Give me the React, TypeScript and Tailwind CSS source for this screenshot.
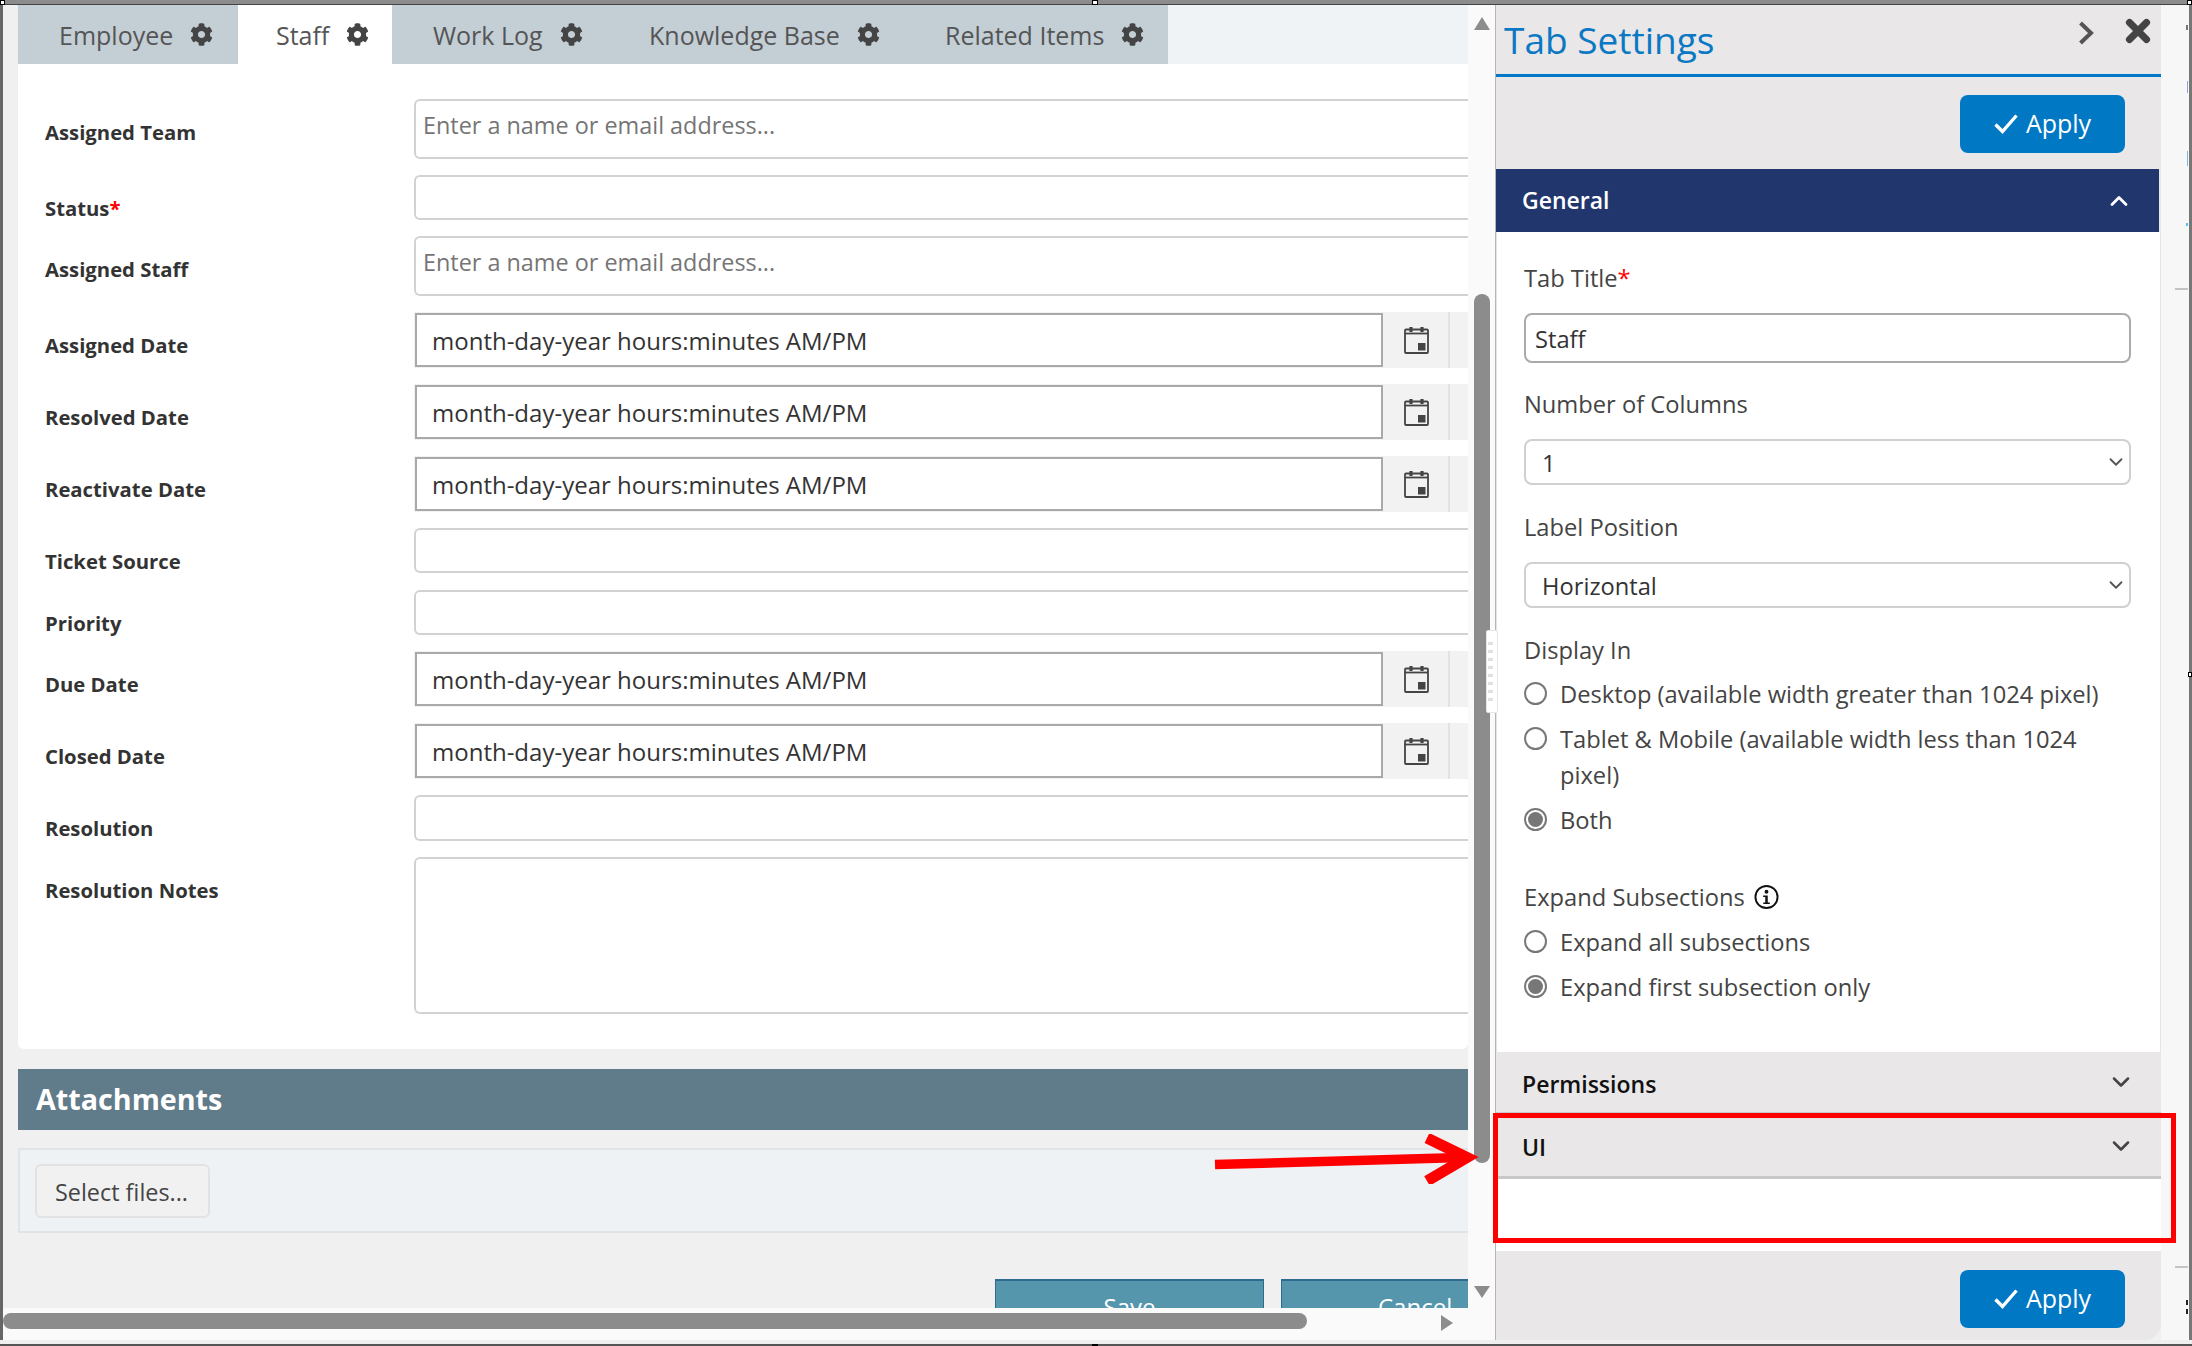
import { FaCog } from 'react-icons/fa'
import { ChevronDown, ChevronUp, X } from 'lucide-react'

const FONT = 'font-["Open_Sans",sans-serif]'

const TABS = [
  { name: 'Employee', w: 'w-[220px]', pl: 'pl-[41px]', active: false },
  { name: 'Staff', w: 'w-[154px]', pl: 'pl-[38px]', active: true },
  { name: 'Work Log', w: 'w-[216px]', pl: 'pl-[41px]', active: false },
  { name: 'Knowledge Base', w: 'w-[299px]', pl: 'pl-[41px]', active: false },
  { name: 'Related Items', w: 'w-[261px]', pl: 'pl-[38px]', active: false },
]

type Row = { label: string; kind: 'people' | 'text' | 'date' | 'area'; box: string; required?: boolean }

const ROWS: Row[] = [
  { label: 'Assigned Team', kind: 'people', box: 'mt-[35px] h-[60px]' },
  { label: 'Status', kind: 'text', box: 'mt-[16px] h-[45px]', required: true },
  { label: 'Assigned Staff', kind: 'people', box: 'mt-[16px] h-[60px]' },
  { label: 'Assigned Date', kind: 'date', box: 'mt-[16px] h-[56px]' },
  { label: 'Resolved Date', kind: 'date', box: 'mt-[16px] h-[56px]' },
  { label: 'Reactivate Date', kind: 'date', box: 'mt-[16px] h-[56px]' },
  { label: 'Ticket Source', kind: 'text', box: 'mt-[16px] h-[45px]' },
  { label: 'Priority', kind: 'text', box: 'mt-[17px] h-[45px]' },
  { label: 'Due Date', kind: 'date', box: 'mt-[16px] h-[56px]' },
  { label: 'Closed Date', kind: 'date', box: 'mt-[16px] h-[56px]' },
  { label: 'Resolution', kind: 'text', box: 'mt-[16px] h-[46px]' },
  { label: 'Resolution Notes', kind: 'area', box: 'mt-[16px] h-[157px]' },
]

// leftovers of the page behind the dialog, visible in the strip on the right
const STRIP_MARKS = [
  'left-[2186px] top-[25px] h-[5px] w-[2px] bg-[#777]',
  'left-[2187px] top-[81px] h-[12px] w-px bg-[#8aa3d8]',
  'left-[2187px] top-[151px] h-[15px] w-px bg-[#7fb5de]',
  'left-[2186px] top-[223px] h-[3px] w-[2px] bg-[#4fc3ea]',
  'left-[2175px] top-[288px] h-[2px] w-[13px] bg-[#c4c4c4]',
  'left-[2175px] top-[1266px] h-[2px] w-[13px] bg-[#c4c4c4]',
  'left-[2186px] top-[1300px] h-[5px] w-[2px] bg-[#222]',
  'left-[2186px] top-[1309px] h-[5px] w-[2px] bg-[#222]',
]

// resize handles of the screenshot's selection frame
const HANDLES = [
  'left-0 top-0 h-[5px] w-[5px] bg-white',
  'left-[1092px] top-0 h-[5px] w-[6px] bg-white',
  'left-[2187px] top-0 h-[5px] w-[5px] bg-white',
  'left-[2188px] top-[672px] h-[5px] w-[4px] bg-white',
  'left-[1092px] top-[1344px] h-[2px] w-[6px] bg-black',
]

function CalendarIcon() {
  return (
    <svg viewBox="0 0 25 27" className="h-[27px] w-[25px]" fill="none" stroke="#444" strokeWidth="1.8">
      <rect x="1" y="2.5" width="23" height="23.5" rx="1" />
      <path d="M1 6.5h23" />
      <path d="M7 0v5M18 0v5" strokeWidth="3.2" />
      <rect x="14" y="16" width="7.5" height="7.5" fill="#444" stroke="none" />
    </svg>
  )
}

function InfoIcon() {
  return (
    <svg viewBox="0 0 26 26" className="h-[26px] w-[25px]" fill="none">
      <circle cx="13" cy="13" r="11.5" stroke="#111" strokeWidth="2" />
      <circle cx="13" cy="7.5" r="2" fill="#111" />
      <path d="M9.5 11.5h4.8v7.2h2.2v1.6H9.7v-1.6h2v-5.6H9.5z" fill="#111" />
    </svg>
  )
}

function FormRow({ row }: { row: Row }) {
  return (
    <div className={`flex shrink-0 ${row.box}`}>
      <div className="w-[396px] shrink-0 pl-[27px] pt-[19px] text-[20.3px] font-bold leading-[28px] text-[#333]">
        {row.label}
        {row.required && <span className="text-[#f00]">*</span>}
      </div>
      {row.kind === 'date' ? (
        <div className="flex min-w-0 flex-1 bg-[#f2f2f2]">
          <div className="my-px ml-px flex w-[968px] items-center border-2 border-[#a9a9a9] bg-white pl-[15px] pt-[1px] text-[24px] text-[#333]">
            month-day-year hours:minutes AM/PM
          </div>
          <div className="flex w-[67px] items-center justify-center border-r-2 border-[#e2e2e2] pl-[2px]">
            <CalendarIcon />
          </div>
        </div>
      ) : (
        <div className="min-w-0 flex-1 rounded-l-[6px] border-y-2 border-l-2 border-[#d2d2d2] bg-white pl-[7px] pt-[9px] text-[23.4px] leading-[30px] text-[#757575]">
          {row.kind === 'people' && 'Enter a name or email address...'}
        </div>
      )}
    </div>
  )
}

function Radio({ label, on, className }: { label: string; on?: boolean; className: string }) {
  return (
    <div className={`flex items-start ${className}`}>
      <span className="mt-[6px] flex h-[23px] w-[23px] shrink-0 items-center justify-center rounded-full border-2 border-[#777] bg-white">
        {on && <span className="h-[15px] w-[15px] rounded-full bg-[#777]" />}
      </span>
      <span className="ml-[13px] text-[23.7px] leading-[36px] text-[#444]">{label}</span>
    </div>
  )
}

function ApplyButton() {
  return (
    <button className="ml-auto flex h-[58px] w-[165px] items-center justify-center gap-[8px] rounded-[8px] bg-[#0178c4] text-[25px] text-white">
      <svg viewBox="0 0 24 20" className="h-[20px] w-[24px]" fill="none" stroke="#fff" strokeWidth="3.4">
        <path d="M1.5 10.5 8.5 17.5 22.5 1.5" />
      </svg>
      Apply
    </button>
  )
}

function RedArrow() {
  return (
    <svg viewBox="0 0 270 50" className="absolute left-[1212px] top-[1134px] h-[50px] w-[270px]" fill="none" stroke="#f00">
      <path d="M3 30.5 250 23.5" strokeWidth="9.5" />
      <path d="M215 4 255 23.5 215 47" strokeWidth="11" />
    </svg>
  )
}

export default function App() {
  return (
    <div className={`relative flex h-[1346px] w-[2192px] flex-col overflow-hidden bg-[#f0f0f0] ${FONT}`}>
      <div className="h-[5px] shrink-0 border-b border-[#444] bg-[#8c8c8c]" />

      <div className="flex min-h-0 flex-1 border-x-[3px] border-l-[#666] border-r-[#777]">
        {/* left: the form */}
        <div className="flex w-[1492px] shrink-0 flex-col">
          <div className="flex min-h-0 flex-1">
            <div className="flex w-[1465px] shrink-0 flex-col pl-[15px]">
              <div className="flex h-[59px] shrink-0 bg-[#eff3f6]">
                {TABS.map((tab) => (
                  <div
                    key={tab.name}
                    className={`flex h-full items-center gap-[17px] pt-[3px] text-[25px] text-[#555] ${tab.w} ${tab.pl} ${tab.active ? 'bg-white' : 'bg-[#c3ced5]'}`}
                  >
                    <span>{tab.name}</span>
                    <FaCog className="mb-[4px] h-[23px] w-[23px] text-[#444]" />
                  </div>
                ))}
              </div>

              <div className="flex h-[985px] shrink-0 flex-col rounded-b-[6px] bg-white">
                {ROWS.map((row) => (
                  <FormRow key={row.label} row={row} />
                ))}
              </div>

              <div className="mt-[20px] flex h-[61px] shrink-0 items-center bg-[#607b89] pl-[18px] pb-[2px] text-[28.7px] font-bold text-white">
                Attachments
              </div>

              <div className="mt-[18px] flex h-[85px] shrink-0 items-center border-y-2 border-l-2 border-[#e0e4e7] bg-[#eef2f5] pl-[15px] pt-[1px]">
                <button className="h-[54px] w-[175px] rounded-[6px] border-2 border-[#e2e2e2] bg-[#f1f1f1] pr-[2px] pt-[3px] text-[23.4px] text-[#444]">
                  Select files...
                </button>
              </div>

              <div className="mt-[46px] flex h-[35px] shrink-0 justify-end gap-[17px] overflow-hidden">
                <div className="h-[60px] w-[269px] border border-t-2 border-[#2e6b8f] bg-[#5596ad] pt-[8px] text-center text-[24px] text-white">
                  Save
                </div>
                <div className="h-[60px] w-[187px] border-l border-t-2 border-[#2e6b8f] bg-[#5596ad] pl-[96px] pt-[8px] text-[24px] text-white">
                  Cancel
                </div>
              </div>
            </div>

            {/* vertical scrollbar */}
            <div className="relative flex w-[27px] shrink-0 flex-col items-center bg-[#fafafa] pl-[6px] pr-[5px]">
              <div className="mt-[12px] h-0 w-0 border-x-[8px] border-b-[13px] border-x-transparent border-b-[#8c8c8c]" />
              <div className="mt-[264px] h-[869px] w-[16px] rounded-full bg-[#8c8c8c]" />
              <div className="mt-[123px] h-0 w-0 border-x-[8px] border-t-[12px] border-x-transparent border-t-[#8c8c8c]" />
            </div>
          </div>

          {/* horizontal scrollbar */}
          <div className="flex h-[32px] shrink-0 items-start bg-[#fafafa] pt-[5px]">
            <div className="h-[16px] w-[1304px] rounded-full bg-[#8c8c8c]" />
            <div className="ml-[134px] mt-[2px] h-0 w-0 border-y-[8px] border-l-[12px] border-y-transparent border-l-[#8c8c8c]" />
          </div>
        </div>

        {/* right: tab settings */}
        <aside className="flex h-[1335px] w-[666px] shrink-0 flex-col overflow-hidden rounded-br-[16px] border-l border-[#b5b5b5] bg-[#e9e7e8]">
          <div className="flex h-[72px] shrink-0 items-start border-b-[3px] border-[#0078c8]">
            <h1 className="ml-[8px] mt-[10px] text-[37px] font-medium leading-[50px] text-[#0a78c2]">Tab Settings</h1>
            <svg viewBox="0 0 16 24" className="ml-auto mt-[16px] h-[24px] w-[16px]" fill="none" stroke="#555" strokeWidth="4">
              <path d="M2.5 2 13 12 2.5 22" />
            </svg>
            <X className="ml-[27px] mr-[6px] mt-[9px] h-[34px] w-[34px] text-[#444]" strokeWidth={5} />
          </div>

          <div className="flex h-[92px] shrink-0 items-center pr-[36px] pt-[2px]">
            <ApplyButton />
          </div>

          <div className="mr-[2px] flex h-[63px] shrink-0 items-center justify-between bg-[#21366c] pl-[26px] pr-[26px] text-[23px] font-semibold text-white">
            General
            <ChevronUp className="h-[28px] w-[28px]" strokeWidth={2.4} />
          </div>

          <div className="flex h-[820px] shrink-0 flex-col border-x border-[#e4e4e4] bg-white pl-[27px] text-[23.7px] text-[#444]">
            <label className="mt-[30px] leading-[32px]">
              Tab Title<span className="text-[#f00]">*</span>
            </label>
            <div className="mt-[19px] flex h-[50px] w-[607px] items-center rounded-[8px] border-2 border-[#aaa] pl-[9px] pt-[3px] text-[#333]">
              Staff
            </div>
            <label className="mt-[25px] leading-[32px]">Number of Columns</label>
            <div className="mt-[19px] flex h-[46px] w-[607px] items-center justify-between rounded-[8px] border-2 border-[#d0d0d0] pl-[16px] pr-[2px] pt-[4px] text-[#333]">
              1
              <ChevronDown className="mb-[4px] h-[22px] w-[22px] text-[#555]" />
            </div>
            <label className="mt-[26px] leading-[32px]">Label Position</label>
            <div className="mt-[19px] flex h-[46px] w-[607px] items-center justify-between rounded-[8px] border-2 border-[#d0d0d0] pl-[16px] pr-[2px] pt-[4px] text-[#333]">
              Horizontal
              <ChevronDown className="mb-[4px] h-[22px] w-[22px] text-[#555]" />
            </div>
            <label className="mt-[26px] leading-[32px]">Display In</label>
            <Radio className="mt-[10px]" label="Desktop (available width greater than 1024 pixel)" />
            <Radio className="mt-[9px] w-[590px]" label="Tablet & Mobile (available width less than 1024 pixel)" />
            <Radio className="mt-[9px]" label="Both" on />
            <div className="mt-[43px] flex items-center gap-[9px] leading-[32px]">
              Expand Subsections
              <InfoIcon />
            </div>
            <Radio className="mt-[11px]" label="Expand all subsections" />
            <Radio className="mt-[9px]" label="Expand first subsection only" on />
          </div>

          <div className="flex h-[63px] shrink-0 items-center justify-between border-b-[3px] border-[#c8c8c8] pl-[26px] pr-[26px] pt-[4px] text-[23px] font-semibold text-[#111]">
            Permissions
            <ChevronDown className="mb-[4px] h-[28px] w-[28px] text-[#444]" strokeWidth={2.2} />
          </div>
          <div className="flex h-[64px] shrink-0 items-center justify-between border-b-[3px] border-[#c8c8c8] pl-[26px] pr-[26px] pt-[4px] text-[23px] font-semibold text-[#111]">
            UI
            <ChevronDown className="mb-[4px] h-[28px] w-[28px] text-[#444]" strokeWidth={2.2} />
          </div>
          <div className="h-[72px] shrink-0 bg-white" />

          <div className="flex flex-1 items-start pr-[36px] pt-[19px]">
            <ApplyButton />
          </div>
        </aside>

        <div className="min-w-0 flex-1 bg-[#f7f7f7]" />
      </div>

      <div className="h-[6px] shrink-0 border-b-2 border-[#555] bg-[#efefef]" />

      {/* splitter grip between the form and the settings panel */}
      <div className="absolute left-[1486px] top-[630px] flex h-[83px] w-[12px] flex-col justify-center gap-[5px] rounded-[2px] border border-[#e6e6e6] bg-white pl-px">
        <span className="h-[3px] w-[5px] bg-[#dde1e4]" />
        <span className="h-[3px] w-[5px] bg-[#dde1e4]" />
        <span className="h-[3px] w-[5px] bg-[#dde1e4]" />
        <span className="h-[3px] w-[5px] bg-[#dde1e4]" />
        <span className="h-[3px] w-[5px] bg-[#dde1e4]" />
        <span className="h-[3px] w-[5px] bg-[#dde1e4]" />
        <span className="h-[3px] w-[5px] bg-[#dde1e4]" />
        <span className="h-[3px] w-[5px] bg-[#dde1e4]" />
      </div>

      {STRIP_MARKS.map((mark) => (
        <div key={mark} className={`absolute ${mark}`} />
      ))}
      {HANDLES.map((handle) => (
        <div key={handle} className={`absolute border border-black ${handle}`} />
      ))}

      {/* annotations drawn on top of the screenshot */}
      <div className="pointer-events-none absolute left-[1493px] top-[1113px] h-[130px] w-[683px] border-[5px] border-[#f00]" />
      <RedArrow />
    </div>
  )
}
